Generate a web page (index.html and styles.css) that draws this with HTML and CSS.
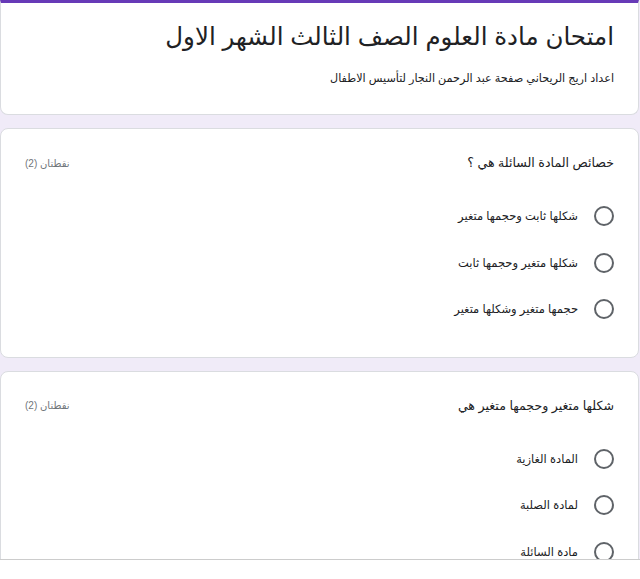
FILE: index.html
```html
<!DOCTYPE html>
<html lang="ar" dir="rtl">
<head>
  <meta charset="UTF-8" />
  <meta name="viewport" content="width=device-width, initial-scale=1.0"/>
  <title>امتحان مادة العلوم</title>
  <link rel="stylesheet" href="styles.css">
</head>
<body>

<div class="page">
  <div class="card header-card">
    <h1 class="form-title">امتحان مادة العلوم الصف الثالث الشهر الاول</h1>
    <p class="form-desc">اعداد اريج الريحاني صفحة عبد الرحمن النجار لتأسيس الاطفال</p>
  </div>

  <div class="card question">
    <div class="q-head">
      <span class="q-title">خصائص المادة السائلة هي ؟</span>
      <span class="q-points">نقطتان (2)</span>
    </div>
    <div class="options">
      <label class="option"><span class="radio"></span><span>شكلها ثابت وحجمها متغير</span></label>
      <label class="option"><span class="radio"></span><span>شكلها متغير وحجمها ثابت</span></label>
      <label class="option"><span class="radio"></span><span>حجمها متغير وشكلها متغير</span></label>
    </div>
  </div>

  <div class="card question">
    <div class="q-head">
      <span class="q-title">شكلها متغير وحجمها متغير هي</span>
      <span class="q-points">نقطتان (2)</span>
    </div>
    <div class="options">
      <label class="option"><span class="radio"></span><span>المادة الغازية</span></label>
      <label class="option"><span class="radio"></span><span>لمادة الصلبة</span></label>
      <label class="option"><span class="radio"></span><span>مادة السائلة</span></label>
    </div>
  </div>
</div>

</body>
</html>
```

FILE: styles.css
```css
* { box-sizing: border-box; }
body {
  margin: 0;
  background-color: #fff;
  font-family: Arial, "Liberation Sans", "DejaVu Sans", sans-serif;
  color: #202124;
}
.page {
  height: 560px;
  overflow: hidden;
  background-color: #f0ebf8;
  border-bottom: 1px solid #ccc;
}
.card {
  background-color: #fff;
  border: 1px solid #dadce0;
  border-radius: 8px;
  margin: 0 1px 13px 0;
  padding: 24px;
}
.header-card {
  border-top: 3px solid #673ab7;
  border-radius: 0 0 8px 8px;
  padding: 18px 24px 28px;
}
.form-title {
  margin: 0;
  font-size: 24.5px;
  line-height: 32px;
  font-weight: normal;
}
.form-desc {
  margin: 17px 0 0;
  font-size: 11.2px;
  line-height: 16px;
}
.q-head {
  display: flex;
  justify-content: space-between;
  align-items: center;
  height: 20px;
}
.q-title {
  font-size: 12.6px;
  line-height: 20px;
}
.q-points {
  font-size: 10px;
  color: #70757a;
}
.options {
  margin-top: 20px;
}
.option {
  display: flex;
  align-items: center;
  height: 46.5px;
  font-size: 11.5px;
  gap: 16px;
}
.radio {
  width: 20px;
  height: 20px;
  border: 2px solid #5f6368;
  border-radius: 50%;
  flex-shrink: 0;
}
```
